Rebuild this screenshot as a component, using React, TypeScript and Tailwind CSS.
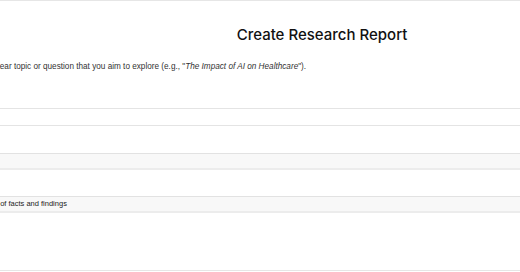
export default function App() {
    return (
        <div className="w-[520px] h-[272px] overflow-hidden bg-white border-t border-[#e6e6e6]">
            <h1
                className="pl-[124px] pt-[25px] text-center text-[15px] leading-[18px] font-medium text-[#111]"
                style={{ fontFamily: "Inter, 'Liberation Sans', sans-serif" }}
            >
                Create Research Report
            </h1>

            <p
                className="-ml-[43px] mt-[18px] whitespace-nowrap text-[8.2px] leading-[10px] text-[#333]"
                style={{ fontFamily: "'Liberation Sans', Arial, sans-serif" }}
            >
                Provide a clear topic or question that you aim to explore (e.g., "<i>The Impact of AI on Healthcare</i>").
            </p>

            <div className="mt-[36px] h-[18px] border-y border-[#e4e4e4]"></div>

            <div className="mt-[27px] h-[17px] border-t border-[#e2e2e2] border-b-2 border-b-[#ececec] bg-[#f8f8f8]"></div>

            <div
                className="mt-[26px] h-[17px] border-t border-[#e2e2e2] border-b-2 border-b-[#ececec] bg-[#f8f8f8] flex items-center -ml-[34px] text-[7.5px] text-[#222] whitespace-nowrap"
                style={{ fontFamily: "'Liberation Sans', Arial, sans-serif" }}
            >
                Summary of facts and findings
            </div>

            <div className="mt-[57px] h-px bg-[#e6e6e6]"></div>
        </div>
    );
}
